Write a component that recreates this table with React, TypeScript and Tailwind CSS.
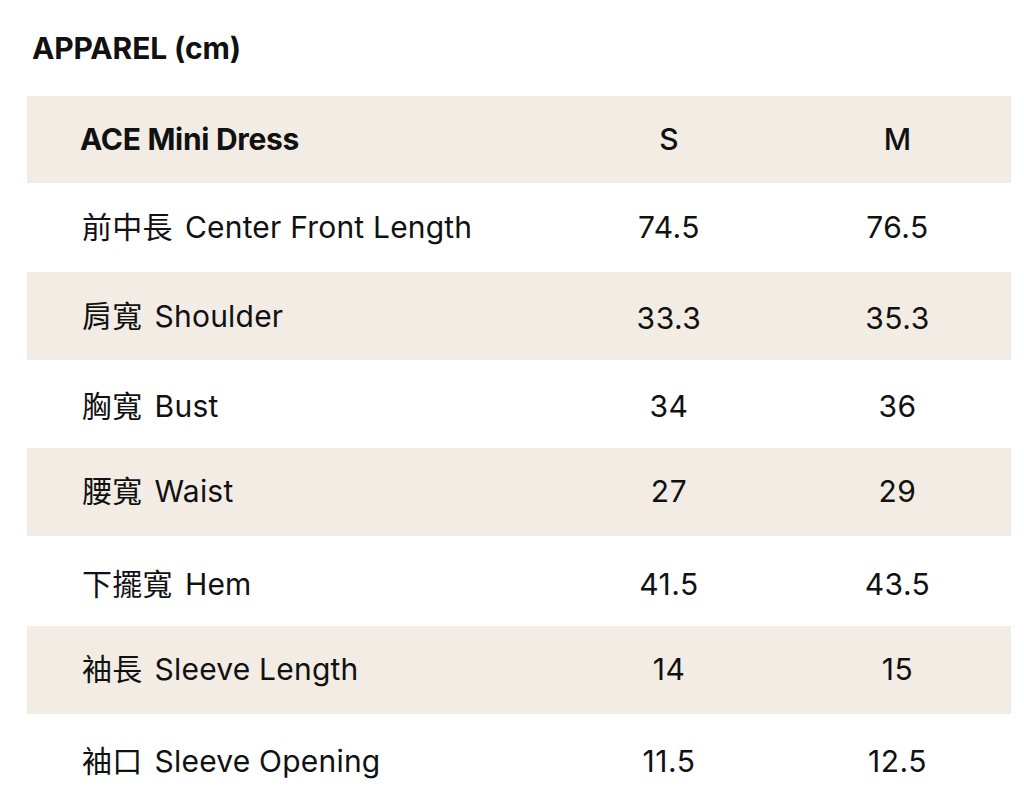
const rows = [
  { zh: "前中長", en: "Center Front Length", s: "74.5", m: "76.5", h: "h-[89px]", pad: "", numPad: "" },
  { zh: "肩寬", en: "Shoulder", s: "33.3", m: "35.3", h: "h-[88px]", pad: "", numPad: "pt-[5px]" },
  { zh: "胸寬", en: "Bust", s: "34", m: "36", h: "h-[88px]", pad: "pt-[4px]", numPad: "" },
  { zh: "腰寬", en: "Waist", s: "27", m: "29", h: "h-[88px]", pad: "pb-[2px]", numPad: "" },
  { zh: "下擺寬", en: "Hem", s: "41.5", m: "43.5", h: "h-[90px]", pad: "pt-[6px]", numPad: "" },
  { zh: "袖長", en: "Sleeve Length", s: "14", m: "15", h: "h-[88px]", pad: "pb-[2px]", numPad: "" },
  { zh: "袖口", en: "Sleeve Opening", s: "11.5", m: "12.5", h: "h-[88px]", pad: "pt-[6px]", numPad: "" },
];

export default function App() {
  return (
    <div
      className="w-[1024px] h-[806px] bg-white text-[#111] overflow-hidden"
      style={{ fontFamily: 'Inter, "Noto Sans CJK TC", sans-serif' }}
    >
      <h1 className="pl-[32px] pt-[30px] text-[30px] leading-[36px] font-bold tracking-[-0.15px]">
        APPAREL (cm)
      </h1>
      <div className="ml-[27px] mr-[13px] mt-[30px]">
        <div className="grid grid-cols-[527px_230px_1fr] h-[87px] items-center bg-[#f2ece5] text-[30px] font-bold">
          <div className="pl-[53px] tracking-[-0.3px]">ACE Mini Dress</div>
          <div className="text-center font-medium">S</div>
          <div className="text-center font-medium">M</div>
        </div>
        {rows.map((r, i) => (
          <div
            key={r.en}
            className={`grid grid-cols-[527px_230px_1fr] items-center text-[30px] ${r.h} ${
              i % 2 === 1 ? "bg-[#f2ece5]" : "bg-white"
            }`}
          >
            <div className={`pl-[55px] flex items-baseline ${r.pad}`}>
              <span className="tracking-[0.3px]">{r.zh}</span>
              <span className="ml-[12px] tracking-[0.2px]">{r.en}</span>
            </div>
            <div className={`text-center tracking-[0.5px] ${r.pad} ${r.numPad}`}>{r.s}</div>
            <div className={`text-center tracking-[0.5px] ${r.pad} ${r.numPad}`}>{r.m}</div>
          </div>
        ))}
      </div>
    </div>
  );
}
